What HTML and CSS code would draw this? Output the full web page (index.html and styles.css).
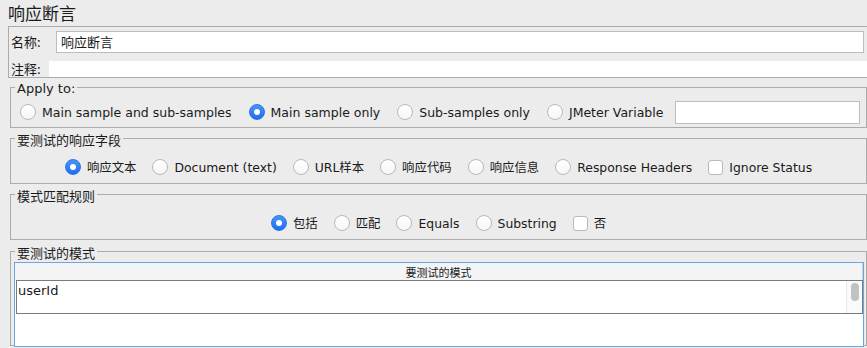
FILE: index.html
```html
<!DOCTYPE html>
<html lang="zh">
<head>
  <meta charset="UTF-8" />
  <title>响应断言</title>
  <link rel="stylesheet" href="styles.css">
</head>
<body>

  <div class="title">响应断言</div>

  <div class="name-panel">
    <div class="name-row">
      <span class="lbl">名称:</span>
      <div class="text-field">响应断言</div>
    </div>
    <div class="comment-row">
      <span class="lbl short">注释:</span>
      <div class="comment-field"></div>
    </div>
  </div>

  <fieldset class="group apply">
    <legend>Apply to:</legend>
    <div class="options left">
      <label class="opt"><span class="radio"></span>Main sample and sub-samples</label>
      <label class="opt"><span class="radio on"></span>Main sample only</label>
      <label class="opt"><span class="radio"></span>Sub-samples only</label>
      <label class="opt"><span class="radio"></span>JMeter Variable</label>
      <div class="var-field"></div>
    </div>
  </fieldset>

  <fieldset class="group">
    <legend>要测试的响应字段</legend>
    <div class="options">
      <label class="opt"><span class="radio on"></span>响应文本</label>
      <label class="opt"><span class="radio"></span>Document (text)</label>
      <label class="opt"><span class="radio"></span>URL样本</label>
      <label class="opt"><span class="radio"></span>响应代码</label>
      <label class="opt"><span class="radio"></span>响应信息</label>
      <label class="opt"><span class="radio"></span>Response Headers</label>
      <label class="opt"><span class="check"></span>Ignore Status</label>
    </div>
  </fieldset>

  <fieldset class="group">
    <legend>模式匹配规则</legend>
    <div class="options">
      <label class="opt"><span class="radio on"></span>包括</label>
      <label class="opt"><span class="radio"></span>匹配</label>
      <label class="opt"><span class="radio"></span>Equals</label>
      <label class="opt"><span class="radio"></span>Substring</label>
      <label class="opt"><span class="check"></span>否</label>
    </div>
  </fieldset>

  <fieldset class="group patterns">
    <legend>要测试的模式</legend>
    <div class="table-wrap">
      <div class="table-head">要测试的模式</div>
      <div class="table-body">
        <div class="cell">userId</div>
        <div class="scrollbar"><div class="thumb"></div></div>
      </div>
    </div>
  </fieldset>

</body>
</html>
```

FILE: styles.css
```css
:root {
  --bg: #ececec;
  --line: #ababab;
  --field-line: #bdbdbd;
  --text: #1a1a1a;
}

body {
  margin: 0;
  width: 867px;
  height: 348px;
  overflow: hidden;
  background: var(--bg);
  color: var(--text);
  font-family: 'DejaVu Sans', 'Noto Sans CJK SC', sans-serif;
  font-size: 12.4px;
}

.title {
  height: 26px;
  padding-left: 8px;
  font-size: 17px;
  line-height: 26px;
  font-family: 'Noto Sans CJK SC', sans-serif;
}

.name-panel {
  margin: 0 -1px 0 8px;
  border: 1px solid var(--line);
  height: 50px;
}

.lbl {
  width: 47px;
  padding-left: 2px;
  box-sizing: border-box;
  font-family: 'Noto Sans CJK SC', sans-serif;
  font-size: 13px;
  line-height: 16px;
}

.lbl.short {
  width: 40px;
}

.name-row {
  display: flex;
  align-items: center;
  padding-top: 4px;
}

.text-field {
  flex: 1;
  height: 22px;
  margin-right: 3px;
  box-sizing: border-box;
  border: 1px solid var(--field-line);
  background: #fff;
  padding-left: 4px;
  line-height: 20px;
  font-family: 'Noto Sans CJK SC', sans-serif;
  font-size: 13px;
}

.comment-row {
  display: flex;
  align-items: center;
  height: 16px;
  margin-top: 8px;
}

.comment-field {
  flex: 1;
  height: 16px;
  background: #fff;
}

.group {
  margin: 1px 0 0 10px;
  padding: 9px 9px 5px 9px;
  border: 1px solid var(--line);
  min-width: 0;
}

.group legend {
  margin-left: -5px;
  padding: 4px 2px 0;
  font-size: 13px;
  line-height: 14px;
  font-family: 'Noto Sans CJK SC', sans-serif;
}

.apply {
  margin-top: 0;
  padding: 5px 0 4px 9px;
  font-size: 12.5px;
}

.apply legend {
  font-family: 'DejaVu Sans', sans-serif;
}

.options {
  display: flex;
  align-items: center;
  justify-content: center;
  gap: 16px;
  height: 22px;
}

.options.left {
  justify-content: flex-start;
  gap: 17px;
}

.opt {
  display: flex;
  align-items: center;
  gap: 6px;
  white-space: nowrap;
}

.radio {
  width: 14px;
  height: 14px;
  border-radius: 50%;
  border: 1px solid #b9b9b9;
  background: linear-gradient(#fff, #f6f6f6);
  position: relative;
}

.radio.on {
  border-color: #2a74e8;
  background: linear-gradient(#4a93f8, #1f6ff0);
}

.radio.on::after {
  content: "";
  position: absolute;
  left: 4px;
  top: 4px;
  width: 6px;
  height: 6px;
  border-radius: 50%;
  background: #fff;
}

.check {
  width: 13px;
  height: 13px;
  border-radius: 3px;
  border: 1px solid #b9b9b9;
  background: #fff;
}

.var-field {
  width: 185px;
  flex-shrink: 0;
  height: 23px;
  margin-left: -5px;
  box-sizing: border-box;
  border: 1px solid var(--field-line);
  background: #fff;
}

.patterns {
  margin-top: 2px;
  padding: 2px 2px 0 3px;
  height: 100px;
}

.patterns legend {
  margin-left: 1px;
}

.table-wrap {
  border: 1px solid #6aa6e0;
  background: #fff;
  height: 100%;
}

.table-head {
  height: 17px;
  line-height: 18px;
  text-align: center;
  background: #f4f4f4;
  border-right: 1px solid #d0d0d0;
  font-family: 'Noto Sans CJK SC', sans-serif;
  font-size: 11px;
}

.table-body {
  display: flex;
  height: 34px;
  margin: 0 0 0 1px;
  box-sizing: border-box;
  border: 1px solid #7a7a7a;
}

.cell {
  flex: 1;
  padding: 1px 0 0 1px;
  font-size: 13px;
  line-height: 18px;
}

.scrollbar {
  width: 15px;
  border-left: 1px solid #e8e8e8;
  background: #fafafa;
  display: flex;
  justify-content: center;
  padding-top: 2px;
}

.thumb {
  width: 8px;
  height: 18px;
  border-radius: 4px;
  background: #c2c2c2;
}
```
